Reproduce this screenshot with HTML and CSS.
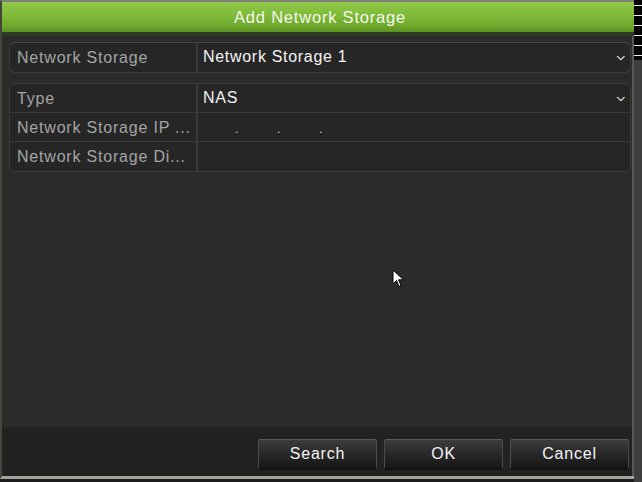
FILE: index.html
```html
<!DOCTYPE html>
<html lang="en">
<head>
  <meta charset="UTF-8" />
  <title>Add Network Storage</title>
  <link rel="stylesheet" href="styles.css">
</head>
<body>

  <div class="screen">
    <!-- Dialog -->
    <div class="dialog">
      <div class="title">Add Network Storage</div>
      <div class="title-edge"></div>

      <div class="content">
        <div class="group">
          <div class="row">
            <div class="label">Network Storage</div>
            <div class="value">Network Storage 1<span class="chev">&#x2335;</span></div>
          </div>
        </div>

        <div class="group">
          <div class="row">
            <div class="label">Type</div>
            <div class="value">NAS<span class="chev">&#x2335;</span></div>
          </div>
          <div class="row">
            <div class="label">Network Storage IP ...</div>
            <div class="value ip">
              <span>.</span><span>.</span><span>.</span>
            </div>
          </div>
          <div class="row">
            <div class="label">Network Storage Di...</div>
            <div class="value"></div>
          </div>
        </div>
      </div>

      <div class="footer">
        <button class="btn">Search</button>
        <button class="btn">OK</button>
        <button class="btn">Cancel</button>
      </div>
    </div>

    <!-- Background strip behind dialog -->
    <div class="side">
      <div class="side-lines"></div>
    </div>

    <!-- Mouse pointer -->
    <svg class="cursor" width="13" height="20" viewBox="0 0 13 20">
      <path d="M1 1 L1 15 L4.5 11.5 L7 17.5 L9 16.6 L6.6 10.8 L11.5 10.8 Z" fill="#fff" stroke="#000" stroke-width="1"/>
    </svg>
  </div>

</body>
</html>
```

FILE: styles.css
```css
body {
  margin: 0;
  background: #1c1c1c;
  font-family: "Liberation Sans", Arial, sans-serif;
  overflow: hidden;
}

.screen {
  position: relative;
  display: flex;
  width: 642px;
  height: 482px;
}

.dialog {
  width: 634px;
  height: 479px;
  display: flex;
  flex-direction: column;
  border-top: 2px solid #7d7f78;
  border-left: 2px solid #45453d;
  border-bottom: 3px solid #a3a39e;
  box-sizing: border-box;
  background: #2b2b2b;
}

.title {
  height: 30px;
  line-height: 31px;
  margin-right: -4px;
  text-align: center;
  color: #f4f8ee;
  font-size: 16.5px;
  letter-spacing: 0.8px;
  background: linear-gradient(to bottom, #8fc84a 0%, #7fba38 45%, #6aa52a 85%, #5a8f22 100%);
}

.title-edge {
  height: 4px;
  background: #2f3a24;
}

.content {
  flex: 1;
  padding: 6px 1px 0 7px;
  border-right: 2px solid #56565a;
}

.group {
  border: 1px solid #3c3c3c;
  border-radius: 6px;
  background: #262626;
  margin-bottom: 10px;
  overflow: hidden;
}

.group:first-child {
  border-top-color: #3e4754;
}

.row {
  display: flex;
  height: 28px;
  border-top: 1px solid #3a3a3a;
}

.row:first-child {
  border-top: none;
}

.row:last-child {
  height: 29px;
}

.label {
  width: 179px;
  flex-shrink: 0;
  padding-left: 7px;
  border-right: 2px solid #3a3a3a;
  line-height: 29px;
  font-size: 16px;
  letter-spacing: 0.8px;
  color: #a4a4a4;
  white-space: nowrap;
  overflow: hidden;
}

.value {
  flex: 1;
  position: relative;
  padding-left: 5px;
  line-height: 27px;
  font-size: 16px;
  letter-spacing: 0.7px;
  color: #f4f4f4;
}

.chev {
  position: absolute;
  right: 4px;
  top: 0;
  font-size: 10px;
  font-weight: bold;
  color: #ffffff;
}

.ip {
  display: flex;
  gap: 38px;
  padding-left: 37px;
  font-size: 12px;
  line-height: 32px;
  color: #d0d0d0;
}

.footer {
  height: 49px;
  display: flex;
  justify-content: flex-end;
  align-items: flex-start;
  gap: 7px;
  padding: 12px 3px 0 0;
  box-sizing: border-box;
  background: #222222;
  border-right: 2px solid #56565a;
}

.btn {
  width: 119px;
  height: 30px;
  padding-top: 1px;
  border: 1px solid #4c4c4c;
  border-top-color: #5a5a5a;
  border-bottom-color: #161616;
  border-radius: 2px;
  background: linear-gradient(to bottom, #3c3c3c 0%, #2a2a2a 45%, #161616 100%);
  color: #f4f4f4;
  font-family: "Liberation Sans", Arial, sans-serif;
  font-size: 16px;
  letter-spacing: 0.8px;
  box-shadow: 0 1px 0 #0c0c0c;
  cursor: pointer;
}

.side {
  flex: 1;
  background: #3e3e3c;
}

.side-lines {
  height: 60px;
  background: repeating-linear-gradient(to bottom, #050505 0px, #050505 5px, #e8e8e8 5px, #e8e8e8 6px, #050505 6px, #050505 10px);
}

.cursor {
  position: absolute;
  left: 392px;
  top: 269px;
}
```
